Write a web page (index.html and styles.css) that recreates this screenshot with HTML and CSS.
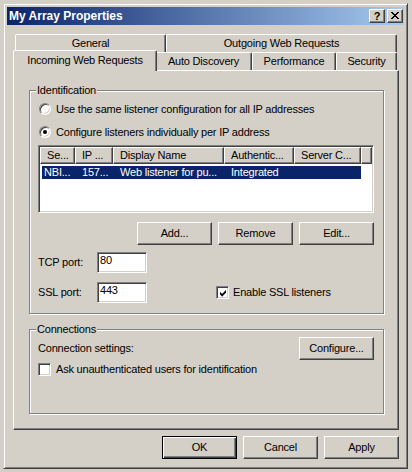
FILE: index.html
```html
<!DOCTYPE html>
<html lang="en">
<head>
<meta charset="utf-8">
<title>My Array Properties</title>
<link rel="stylesheet" href="styles.css">
</head>
<body>
<div class="window">
  <div class="titlebar">
    <span class="title">My Array Properties</span>
    <div class="tb-buttons">
      <span class="tb-btn tb-help">?</span>
      <span class="tb-btn"><svg class="close-glyph" width="8" height="7" viewBox="0 0 8 7"><path d="M0 0h2v1H0zM6 0h2v1H6zM1 1h2v1H1zM5 1h2v1H5zM2 2h4v1H2zM3 3h2v1H3zM2 4h4v1H2zM1 5h2v1H1zM5 5h2v1H5zM0 6h2v1H0zM6 6h2v1H6z" fill="#000"/></svg></span>
    </div>
  </div>
  <div class="client">
    <div class="tabs">
      <div class="tab-row">
        <div class="tab t-general">General</div>
        <div class="tab t-outgoing">Outgoing Web Requests</div>
      </div>
      <div class="tab-row">
        <div class="tab selected t-incoming">Incoming Web Requests</div>
        <div class="tab t-auto">Auto Discovery</div>
        <div class="tab t-perf">Performance</div>
        <div class="tab t-sec">Security</div>
      </div>
    </div>
    <div class="panel">
      <fieldset class="group ident">
        <legend>Identification</legend>
        <div class="ident-body">
          <div class="radio-row r1"><span class="radio"></span><span>Use the same listener configuration for all IP addresses</span></div>
          <div class="radio-row r2"><span class="radio checked"></span><span>Configure listeners individually per IP address</span></div>
          <div class="list">
            <div class="list-header">
              <div class="hcell c1">Se...</div>
              <div class="hcell c2">IP ...</div>
              <div class="hcell c3">Display Name</div>
              <div class="hcell c4">Authentic...</div>
              <div class="hcell c5">Server C...</div>
              <div class="hcell filler"></div>
            </div>
            <div class="list-row selected-row">
              <div class="rcell first">NBI...</div>
              <div class="rcell c2">157...</div>
              <div class="rcell c3">Web listener for pu...</div>
              <div class="rcell c4">Integrated</div>
              <div class="rcell c5"></div>
            </div>
          </div>
          <div class="button-row list-buttons">
            <button class="btn">Add...</button>
            <button class="btn">Remove</button>
            <button class="btn">Edit...</button>
          </div>
          <div class="port-row tcp">
            <span class="port-label">TCP port:</span>
            <span class="field">80</span>
          </div>
          <div class="port-row ssl">
            <span class="port-label">SSL port:</span>
            <span class="field">443</span>
            <span class="check-wrap">
              <span class="check"><svg width="7" height="7" viewBox="0 0 7 7"><path d="M0 2h1v3H0zM1 3h1v3H1zM2 4h1v3H2zM3 3h1v3H3zM4 2h1v3H4zM5 1h1v3H5zM6 0h1v3H6z" fill="#000"/></svg></span>
              <span>Enable SSL listeners</span>
            </span>
          </div>
        </div>
      </fieldset>
      <fieldset class="group conn">
        <legend>Connections</legend>
        <div class="conn-body">
          <div class="conn-row">
            <span>Connection settings:</span>
            <button class="btn">Configure...</button>
          </div>
          <div class="check-row">
            <span class="check"></span>
            <span>Ask unauthenticated users for identification</span>
          </div>
        </div>
      </fieldset>
    </div>
    <div class="button-row dialog-buttons">
      <button class="btn default">OK</button>
      <button class="btn">Cancel</button>
      <button class="btn">Apply</button>
    </div>
  </div>
</div>
</body>
</html>
```

FILE: styles.css
```css
* { box-sizing: border-box; }

html, body { margin: 0; }

body {
  width: 412px;
  height: 472px;
  overflow: hidden;
  padding: 3px 0 0 3px;
  background: #d4d0c8;
  font-family: "Liberation Sans", Arial, sans-serif;
  font-size: 11px;
  line-height: 13px;
  letter-spacing: -0.2px;
  color: #000;
}

.window {
  width: 405px;
  height: 466px;
  border: 1px solid;
  border-color: #d4d0c8 #404040 #404040 #d4d0c8;
  box-shadow: inset 1px 1px #fff, inset -1px -1px #808080;
  padding: 3px;
  background: #d4d0c8;
  display: flex;
  flex-direction: column;
}

/* title bar */
.titlebar {
  height: 18px;
  flex: none;
  display: flex;
  align-items: flex-start;
  background: linear-gradient(to right, #0a246a, #a6caf0);
}

.title {
  flex: 1;
  color: #fff;
  font-weight: bold;
  font-size: 12px;
  line-height: 18px;
  letter-spacing: 0;
  padding-left: 2px;
  white-space: nowrap;
}

.tb-buttons {
  display: flex;
  gap: 2px;
  margin: 2px 1px 0 0;
}

.tb-btn {
  width: 16px;
  height: 14px;
  background: #d4d0c8;
  border: 1px solid;
  border-color: #fff #404040 #404040 #fff;
  box-shadow: inset -1px -1px #808080;
  display: flex;
  align-items: center;
  justify-content: center;
}

.tb-help {
  font-weight: bold;
  font-size: 11px;
  line-height: 12px;
  letter-spacing: 0;
  padding-bottom: 1px;
}

.close-glyph { display: block; margin-bottom: 1px; }

/* client */
.client {
  flex: 1;
  padding: 9px 5px 0 6px;
  display: flex;
  flex-direction: column;
}

/* tabs */
.tabs {
  padding: 0 2px;
}

.tab-row {
  display: flex;
  height: 18px;
}

.tab {
  flex: none;
  height: 18px;
  border-top: 1px solid #fff;
  border-left: 1px solid #fff;
  border-right: 1px solid #404040;
  border-radius: 2px 2px 0 0;
  box-shadow: inset -1px 0 #808080;
  background: #d4d0c8;
  text-align: center;
  line-height: 16px;
  white-space: nowrap;
}

.t-general { width: 151px; }
.t-outgoing { width: 231px; }
.t-incoming { width: 144px; }
.t-auto { width: 97px; }
.t-perf { width: 84px; }
.t-sec { width: 61px; }

.tab.selected {
  position: relative;
  z-index: 1;
  height: 21px;
  margin: -2px -2px 0;
  padding-top: 1px;
}

/* panel */
.panel {
  flex: none;
  height: 360px;
  border: 1px solid;
  border-color: #fff #404040 #404040 #fff;
  box-shadow: inset -1px -1px #808080;
  padding: 0 14px 0 15px;
}

.group {
  margin: 0;
  padding: 0;
  min-width: 0;
  border: 1px solid #808080;
  box-shadow: inset 1px 1px #fff, 1px 1px #fff;
}

.group legend {
  margin-left: 6px;
  padding: 0 1px;
  line-height: 14px;
  background: #d4d0c8;
}

.ident { margin-top: 12px; }
.conn { margin-top: 8px; }

.ident-body { padding: 0 9px 10px 8px; }
.conn-body { padding: 1px 9px 37px 8px; }

/* radios */
.radio-row {
  display: flex;
  align-items: center;
  gap: 5px;
  height: 16px;
  margin-left: 1px;
  white-space: nowrap;
}
.r1 { margin-top: 4px; }
.r2 { margin-top: 7px; }

.radio {
  position: relative;
  flex: none;
  width: 12px;
  height: 12px;
  border-radius: 50%;
  border: 1px solid;
  border-color: #808080 #fff #fff #808080;
  box-shadow: inset 1px 1px #404040, inset -1px -1px #d4d0c8;
  background: #fff;
}

.radio.checked::after {
  content: "";
  position: absolute;
  left: 3px;
  top: 3px;
  width: 4px;
  height: 4px;
  border-radius: 50%;
  background: #000;
}

/* list view */
.list {
  margin-top: 5px;
  height: 68px;
  border: 1px solid;
  border-color: #808080 #fff #fff #808080;
  box-shadow: inset 1px 1px #404040, inset -1px -1px #d4d0c8;
  background: #fff;
  padding: 1px;
  overflow: hidden;
}

.list-header {
  display: flex;
  height: 17px;
}

.hcell {
  flex: none;
  height: 17px;
  border: 1px solid;
  border-color: #fff #404040 #404040 #fff;
  box-shadow: inset -1px -1px #808080;
  background: #d4d0c8;
  padding-left: 6px;
  line-height: 15px;
  white-space: nowrap;
  overflow: hidden;
}

.c1 { width: 35px; }
.c2 { width: 38px; }
.c3 { width: 111px; }
.c4 { width: 70px; }
.c5 { width: 67px; }
.hcell.filler { flex: 1; }

.list-row {
  display: flex;
  width: 319px;
  height: 13px;
  margin: 2px 0 0 2px;
  line-height: 13px;
}

.selected-row {
  background: #0a246a;
  color: #fff;
}

.rcell {
  flex: none;
  padding-left: 7px;
  white-space: nowrap;
  overflow: hidden;
}
.rcell.first { width: 33px; padding-left: 2px; }

/* buttons */
.button-row {
  display: flex;
  justify-content: flex-end;
  gap: 6px;
}

.list-buttons { margin-top: 9px; }

.btn {
  appearance: none;
  flex: none;
  width: 75px;
  height: 23px;
  margin: 0;
  padding: 0;
  border: 1px solid;
  border-color: #fff #404040 #404040 #fff;
  box-shadow: inset -1px -1px #808080;
  background: #d4d0c8;
  font: inherit;
  letter-spacing: inherit;
  color: #000;
  text-align: center;
  line-height: 19px;
}

.btn.default {
  border-color: #000;
  box-shadow: inset 1px 1px #fff, inset -1px -1px #404040, inset -2px -2px #808080;
}

/* ports */
.port-row {
  display: flex;
  align-items: center;
  height: 21px;
  white-space: nowrap;
}
.tcp { margin-top: 7px; }
.ssl { margin-top: 9px; }

.port-label {
  width: 59px;
  flex: none;
}

.field {
  flex: none;
  width: 50px;
  height: 21px;
  border: 1px solid;
  border-color: #808080 #fff #fff #808080;
  box-shadow: inset 1px 1px #404040, inset -1px -1px #d4d0c8;
  background: #fff;
  padding: 1px 2px 0;
  line-height: 13px;
  align-self: flex-start;
}

.check-wrap {
  display: flex;
  align-items: center;
  gap: 4px;
  margin-left: 69px;
}

.check {
  flex: none;
  width: 13px;
  height: 13px;
  border: 1px solid;
  border-color: #808080 #fff #fff #808080;
  box-shadow: inset 1px 1px #404040, inset -1px -1px #d4d0c8;
  background: #fff;
  padding: 2px;
  display: flex;
}

.check svg { display: block; margin: 1px 0 0 1px; }

/* connections */
.conn-row {
  display: flex;
  align-items: center;
  justify-content: space-between;
  white-space: nowrap;
}

.check-row {
  display: flex;
  align-items: center;
  gap: 5px;
  margin-top: 3px;
  height: 13px;
  white-space: nowrap;
}

.dialog-buttons { margin-top: 6px; }
```
